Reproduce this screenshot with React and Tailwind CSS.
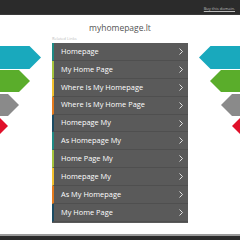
const links = [
  { label: "Homepage", color: "border-l-[#1e8a84]" },
  { label: "My Home Page", color: "border-l-[#a5c43b]" },
  { label: "Where Is My Homepage", color: "border-l-[#f2c12e]" },
  { label: "Where Is My Home Page", color: "border-l-[#e57a1c]" },
  { label: "Homepage My", color: "border-l-[#1b4b63]" },
  { label: "As Homepage My", color: "border-l-[#1e8a84]" },
  { label: "Home Page My", color: "border-l-[#a5c43b]" },
  { label: "Homepage My", color: "border-l-[#f2c12e]" },
  { label: "As My Homepage", color: "border-l-[#e57a1c]" },
  { label: "My Home Page", color: "border-l-[#1b4b63]" },
];

function Arrows({ side }) {
  // decorative arrows beside the list
  const left = side === "left";
  const shapes = [
    { y: 46, h: 23, tip: 41, fill: "#19a9bd" },
    { y: 70, h: 22, tip: 30, fill: "#5aad2b" },
    { y: 94, h: 22, tip: 19, fill: "#8a8a8a" },
    { y: 117, h: 18, tip: 8, fill: "#e0102a" },
  ];
  return (
    <svg width="52" height="180" viewBox="0 0 52 180" className="shrink-0">
      {shapes.map((s, i) => {
        const top = s.y - 43;
        const mid = top + s.h / 2;
        const body = s.tip - s.h / 2;
        const pts = left
          ? `0,${top} ${body},${top} ${s.tip},${mid} ${body},${top + s.h} 0,${top + s.h}`
          : `52,${top} ${52 - body},${top} ${52 - s.tip},${mid} ${52 - body},${top + s.h} 52,${top + s.h}`;
        return <polygon key={i} points={pts} fill={s.fill} />;
      })}
    </svg>
  );
}

export default function App() {
  return (
    <div className="w-[240px] h-[240px] bg-white flex flex-col overflow-hidden font-['Open_Sans',sans-serif]">
      {/* Top bar */}
      <div className="h-[15px] bg-[#2b2b2b] border-b border-[#3a3a3a] flex items-center justify-end pr-[5px] pt-[4px]">
        <a className="text-[4px] text-[#bbbbbb] underline leading-none">Buy this domain.</a>
      </div>

      {/* Title */}
      <h1 className="text-center text-[8.5px] text-[#555555] leading-none mt-[9px] h-[10px]">
        myhomepage.lt
      </h1>

      <div className="text-[4px] text-[#bdbdbd] leading-none mt-[3px] ml-[52px] h-[5px]">
        Related Links
      </div>

      {/* Main */}
      <div className="flex mt-[1px]">
        <Arrows side="left" />
        <ul className="w-[136px] bg-[#5a5a5a]">
          {links.map((l, i) => (
            <li
              key={i}
              className={`h-[17.9px] flex items-center justify-between border-l-[2px] ${l.color} border-b border-b-[#4f4f4f] pl-[7px] pr-[5px]`}
            >
              <span className="text-[7.4px] text-white font-medium leading-none">{l.label}</span>
              <svg width="4" height="7" viewBox="0 0 4 7">
                <path d="M0.5 0.5 L3.5 3.5 L0.5 6.5" fill="none" stroke="#eeeeee" strokeWidth="0.9" />
              </svg>
            </li>
          ))}
        </ul>
        <Arrows side="right" />
      </div>

      <div className="flex-1" />
      <div className="h-[6px] bg-[#2b2b2b] border-t-[2px] border-[#9a9a9a]" />
    </div>
  );
}
